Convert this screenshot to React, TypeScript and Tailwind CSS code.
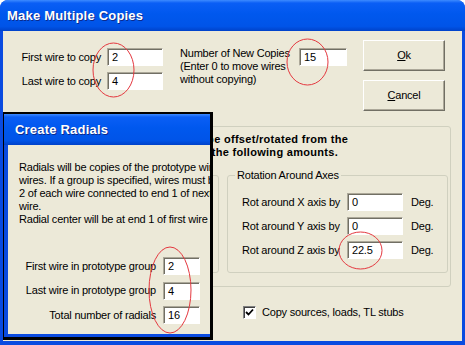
import React from 'react';

const titleBar =
  'bg-[linear-gradient(180deg,#3d8bff_0%,#0a5ef5_10%,#0058ee_45%,#0054e8_85%,#0042c9_100%)]';

function Field({ value, w }: { value: string; w: string }) {
  return (
    <div
      className={`${w} h-[18px] bg-white border border-t-[#aca899] border-l-[#aca899] border-b-white border-r-white shadow-[inset_1px_1px_0_#716f64] pl-[4px] pt-[2px] leading-[13px]`}
    >
      {value}
    </div>
  );
}

function Button({ children }: { children: React.ReactNode }) {
  return (
    <div className="w-[82px] h-[31px] flex items-center justify-center bg-[#ece9d8] border border-t-white border-l-white border-b-[#716f64] border-r-[#716f64] shadow-[inset_-1px_-1px_0_#aca899]">
      {children}
    </div>
  );
}

function RotRow({ label, value }: { label: string; value: string }) {
  return (
    <div className="flex items-center h-[18px]">
      <span className="w-[105px] leading-[13px]">{label}</span>
      <Field value={value} w="w-[56px]" />
      <span className="ml-[8px] leading-[13px]">Deg.</span>
    </div>
  );
}

export default function App() {
  return (
    <div className="relative w-[465px] h-[345px] font-['Liberation_Sans',Arial,sans-serif] text-[11px] tracking-[-0.2px] text-black">
      {/* main window */}
      <div className="flex flex-col w-full h-full rounded-t-[8px] bg-[#0a4be0] overflow-hidden">
        <div className={`h-[31px] shrink-0 flex items-center pl-[7px] ${titleBar}`}>
          <span className="text-white font-bold text-[13px] tracking-[0.2px] [text-shadow:1px_1px_0_#0c2a8c]">
            Make Multiple Copies
          </span>
        </div>
        <div className="flex-1 mx-[3px] mb-[4px] bg-[#ece9d8] flex flex-col">
          <div className="flex pt-[9px]">
            <div className="ml-[8px] pt-[8px] flex flex-col gap-[6px]">
              <div className="flex items-center">
                <span className="w-[90px] text-right leading-[13px]">First wire to copy</span>
                <div className="ml-[6px]"><Field value="2" w="w-[56px]" /></div>
              </div>
              <div className="flex items-center">
                <span className="w-[90px] text-right leading-[13px]">Last wire to copy</span>
                <div className="ml-[6px]"><Field value="4" w="w-[56px]" /></div>
              </div>
            </div>
            <div className="ml-[17px] pt-[8px] flex items-start">
              <div className="w-[119px] leading-[13px] -mt-[1px]">
                Number of New Copies
                <br />
                (Enter 0 to move wires
                <br />
                without copying)
              </div>
              <Field value="15" w="w-[48px]" />
            </div>
            <div className="ml-[16px] flex flex-col gap-[9px]">
              <Button><span><span className="underline">O</span>k</span></Button>
              <Button><span><span className="underline">C</span>ancel</span></Button>
            </div>
          </div>

          <div className="mt-[15px] ml-[7px] w-[441px] h-[161px] border border-[#d0d0bf] rounded-[3px]">
            <div className="pt-[6px] pl-[132px] font-bold tracking-[0.3px] leading-[13px] whitespace-nowrap">
              Copies will be offset/rotated from the
              <br />
              originals by the following amounts.
            </div>
            <div className="flex mt-[10px] pl-[7px] gap-[8px]">
              <fieldset className="w-[201px] h-[104px] border border-[#d0d0bf] rounded-[3px] px-[14px]">
                <legend className="ml-[-6px] px-[2px] leading-[13px]">Translation</legend>
              </fieldset>
              <fieldset className="w-[216px] h-[104px] border border-[#d0d0bf] rounded-[3px] px-[14px] pt-[11px]">
                <legend className="ml-[-7px] px-[2px] leading-[13px]">Rotation Around Axes</legend>
                <div className="flex flex-col gap-[6px]">
                  <RotRow label="Rot around X axis by" value="0" />
                  <RotRow label="Rot around Y axis by" value="0" />
                  <RotRow label="Rot around Z axis by" value="22.5" />
                </div>
              </fieldset>
            </div>
          </div>

          <div className="mt-[19px] ml-[240px] flex items-center">
            <div className="w-[13px] h-[13px] bg-white border border-t-[#808080] border-l-[#808080] border-b-white border-r-white shadow-[inset_1px_1px_0_#404040] flex items-center justify-center">
              <svg width="9" height="9" viewBox="0 0 9 9">
                <path d="M1 4 L3.5 6.5 L8 1.5" fill="none" stroke="#000" strokeWidth="1.8" />
              </svg>
            </div>
            <span className="ml-[6px] leading-[13px]">Copy sources, loads, TL stubs</span>
          </div>
        </div>
      </div>

      {/* Create Radials window on top */}
      <div className="absolute left-[3px] top-[112px] w-[210px] h-[228px] flex flex-col border-black border-t-2 border-l border-r-[3px] border-b-[3px]">
        <div className={`h-[31px] shrink-0 flex items-center pl-[11px] ${titleBar}`}>
          <span className="text-white font-bold text-[13px] tracking-[0.2px] [text-shadow:1px_1px_0_#0c2a8c]">
            Create Radials
          </span>
        </div>
        <div className="flex-1 bg-[#ece9d8] border-l-[4px] border-b-[3px] border-[#0a4be0] overflow-hidden">
          <div className="pt-[16px] pl-[11px] leading-[13px] whitespace-nowrap">
            <div>Radials will be copies of the prototype wire or group of</div>
            <div>wires. If a group is specified, wires must be connected end</div>
            <div>2 of each wire connected to end 1 of next</div>
            <div>wire.</div>
            <div>Radial center will be at end 1 of first wire</div>
          </div>
          <div className="mt-[31px] pr-[10px] flex flex-col gap-[6.5px]">
            <div className="flex items-center justify-end">
              <span className="leading-[13px]">First wire in prototype group</span>
              <div className="ml-[7px]"><Field value="2" w="w-[37px]" /></div>
            </div>
            <div className="flex items-center justify-end">
              <span className="leading-[13px]">Last wire in prototype group</span>
              <div className="ml-[7px]"><Field value="4" w="w-[37px]" /></div>
            </div>
            <div className="flex items-center justify-end">
              <span className="leading-[13px]">Total number of radials</span>
              <div className="ml-[7px]"><Field value="16" w="w-[37px]" /></div>
            </div>
          </div>
        </div>
      </div>

      {/* red annotation ellipses */}
      <svg className="absolute left-0 top-0 pointer-events-none" width="465" height="345">
        <g fill="none" stroke="#e4383f" strokeWidth="1">
          <ellipse cx="113.5" cy="70" rx="20.5" ry="27" />
          <ellipse cx="307.5" cy="62" rx="20.5" ry="23" />
          <ellipse cx="170" cy="290" rx="21" ry="43" />
          <ellipse cx="360.5" cy="250.5" rx="21.5" ry="18.5" />
        </g>
      </svg>
    </div>
  );
}
